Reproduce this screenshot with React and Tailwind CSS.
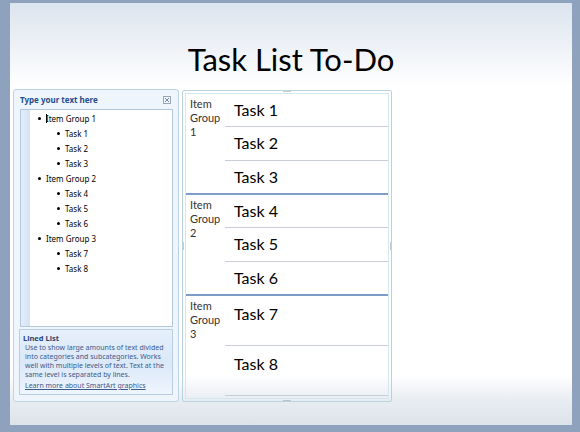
import React from 'react';

const outline = [
  { text: 'Item Group 1', level: 0, cursor: true },
  { text: 'Task 1', level: 1 },
  { text: 'Task 2', level: 1 },
  { text: 'Task 3', level: 1 },
  { text: 'Item Group 2', level: 0 },
  { text: 'Task 4', level: 1 },
  { text: 'Task 5', level: 1 },
  { text: 'Task 6', level: 1 },
  { text: 'Item Group 3', level: 0 },
  { text: 'Task 7', level: 1 },
  { text: 'Task 8', level: 1 },
];

const groups = [
  { n: 1, h: 'h-[101px]', tasks: ['Task 1', 'Task 2', 'Task 3'] },
  { n: 2, h: 'h-[101px]', tasks: ['Task 4', 'Task 5', 'Task 6'] },
  { n: 3, h: 'h-[100px]', tasks: ['Task 7', 'Task 8'], last: true },
];

function TextPane() {
  return (
    <div className="w-[166px] h-[313px] border border-[#bcd3e8] rounded-[3px] bg-[#eef5fc] flex flex-col px-[5px] pb-[6px] font-['Noto_Sans',sans-serif]">
      <div className="flex items-center justify-between h-[19px] pl-[1px] pr-[1px]">
        <span className="text-[8px] font-bold text-[#1f4e8c] leading-none">Type your text here</span>
        <svg width="8" height="8" viewBox="0 0 8 8" className="mr-[1px]">
          <rect x="0.5" y="0.5" width="7" height="7" fill="none" stroke="#9aa5b2" />
          <path d="M2 2 L6 6 M6 2 L2 6" stroke="#7d8895" strokeWidth="1" />
        </svg>
      </div>
      <div className="flex-1 flex border border-[#b3c8dd] bg-white ml-[1px]">
        <div className="w-[9px] bg-gradient-to-r from-[#e4edf9] to-[#d4e2f4]"></div>
        <div className="flex-1 pt-[1px]">
          {outline.map((o, i) => (
            <div key={i} className={`flex items-center h-[15px] ${o.level === 0 ? 'pl-[8px]' : 'pl-[27px]'}`}>
              <span className="w-[3px] h-[3px] rounded-full bg-black mr-[5px]"></span>
              {o.cursor && <span className="w-[1px] h-[9px] bg-black -mr-[1px]"></span>}
              <span className="text-[8px] text-black leading-none">{o.text}</span>
            </div>
          ))}
        </div>
      </div>
      <div className="h-[66px] mt-[2px] border border-[#b8cde2] bg-gradient-to-b from-[#e6f0fb] via-[#dbe8f8] to-[#eef5fd] px-[3px] pt-[3px] text-[7px] leading-[9px]">
        <div className="font-bold text-[#2a4570] text-[7.5px] leading-[10px]">Lined List</div>
        <div className="pl-[2px] text-[#3c5a8a]">
          Use to show large amounts of text divided into categories and subcategories. Works well with multiple levels of text. Text at the same level is separated by lines.
        </div>
        <div className="pl-[2px] mt-[2px] text-[#3c5a8a] underline">Learn more about SmartArt graphics</div>
      </div>
    </div>
  );
}

function Dots({ vertical }) {
  return (
    <div className={`flex ${vertical ? 'flex-col' : 'flex-row'} gap-[1px]`}>
      {[0, 1, 2, 3].map((i) => (
        <span key={i} className="w-[1px] h-[1px] bg-[#8a9aa8]"></span>
      ))}
    </div>
  );
}

function SmartArt() {
  return (
    <div className="relative w-[210px] h-[312px] border border-[#b7d3dc] rounded-[2px] p-[2px]">
      <div className="absolute top-[0px] left-1/2 -translate-x-1/2"><Dots /></div>
      <div className="absolute bottom-[0px] left-1/2 -translate-x-1/2"><Dots /></div>
      <div className="absolute left-[0px] top-1/2 -translate-y-1/2"><Dots vertical /></div>
      <div className="absolute right-[0px] top-1/2 -translate-y-1/2"><Dots vertical /></div>
      <div className="h-full border border-[#d3e8ee] flex flex-col font-['Lato',sans-serif]">
        {groups.map((g) => (
          <div key={g.n} className={`flex ${g.h} ${g.last ? '' : 'border-b-2 border-[#7f9cc8]'}`}>
            <div className="w-[39px] pl-[4px] pt-[3px] text-[11px] leading-[14px] text-[#333]">
              Item<br />Group<br />{g.n}
            </div>
            <div className="flex-1 flex flex-col">
              {g.tasks.map((t, i) => (
                <div
                  key={t}
                  className={`flex-1 pl-[9px] ${g.tasks.length === 2 ? 'pt-[8px]' : 'pt-[6px]'} text-[16px] leading-[20px] text-black ${
                    i < g.tasks.length - 1 || g.last ? 'border-b border-[#c9ced6]' : ''
                  }`}
                >
                  {t}
                </div>
              ))}
            </div>
          </div>
        ))}
      </div>
    </div>
  );
}

export default function App() {
  return (
    <div className="w-[580px] h-[432px] bg-[#8ea2bd] overflow-hidden pt-[3px] pl-[10px]">
      <div className="w-[562px] h-[422px] bg-gradient-to-b from-[#dce4ee] via-white via-[20%] to-white flex flex-col relative">
        <div className="absolute inset-x-0 bottom-0 h-[50px] bg-gradient-to-b from-white via-[#e9edf2] to-[#dde3ea]"></div>
        <div className="h-[86px] flex items-end justify-center pb-[14px] relative">
          <span className="font-['Lato',sans-serif] text-[31px] leading-none text-black">Task List To-Do</span>
        </div>
        <div className="flex items-start pl-[3px] gap-[3px] relative">
          <TextPane />
          <div className="pt-[1px]">
            <SmartArt />
          </div>
        </div>
      </div>
    </div>
  );
}
